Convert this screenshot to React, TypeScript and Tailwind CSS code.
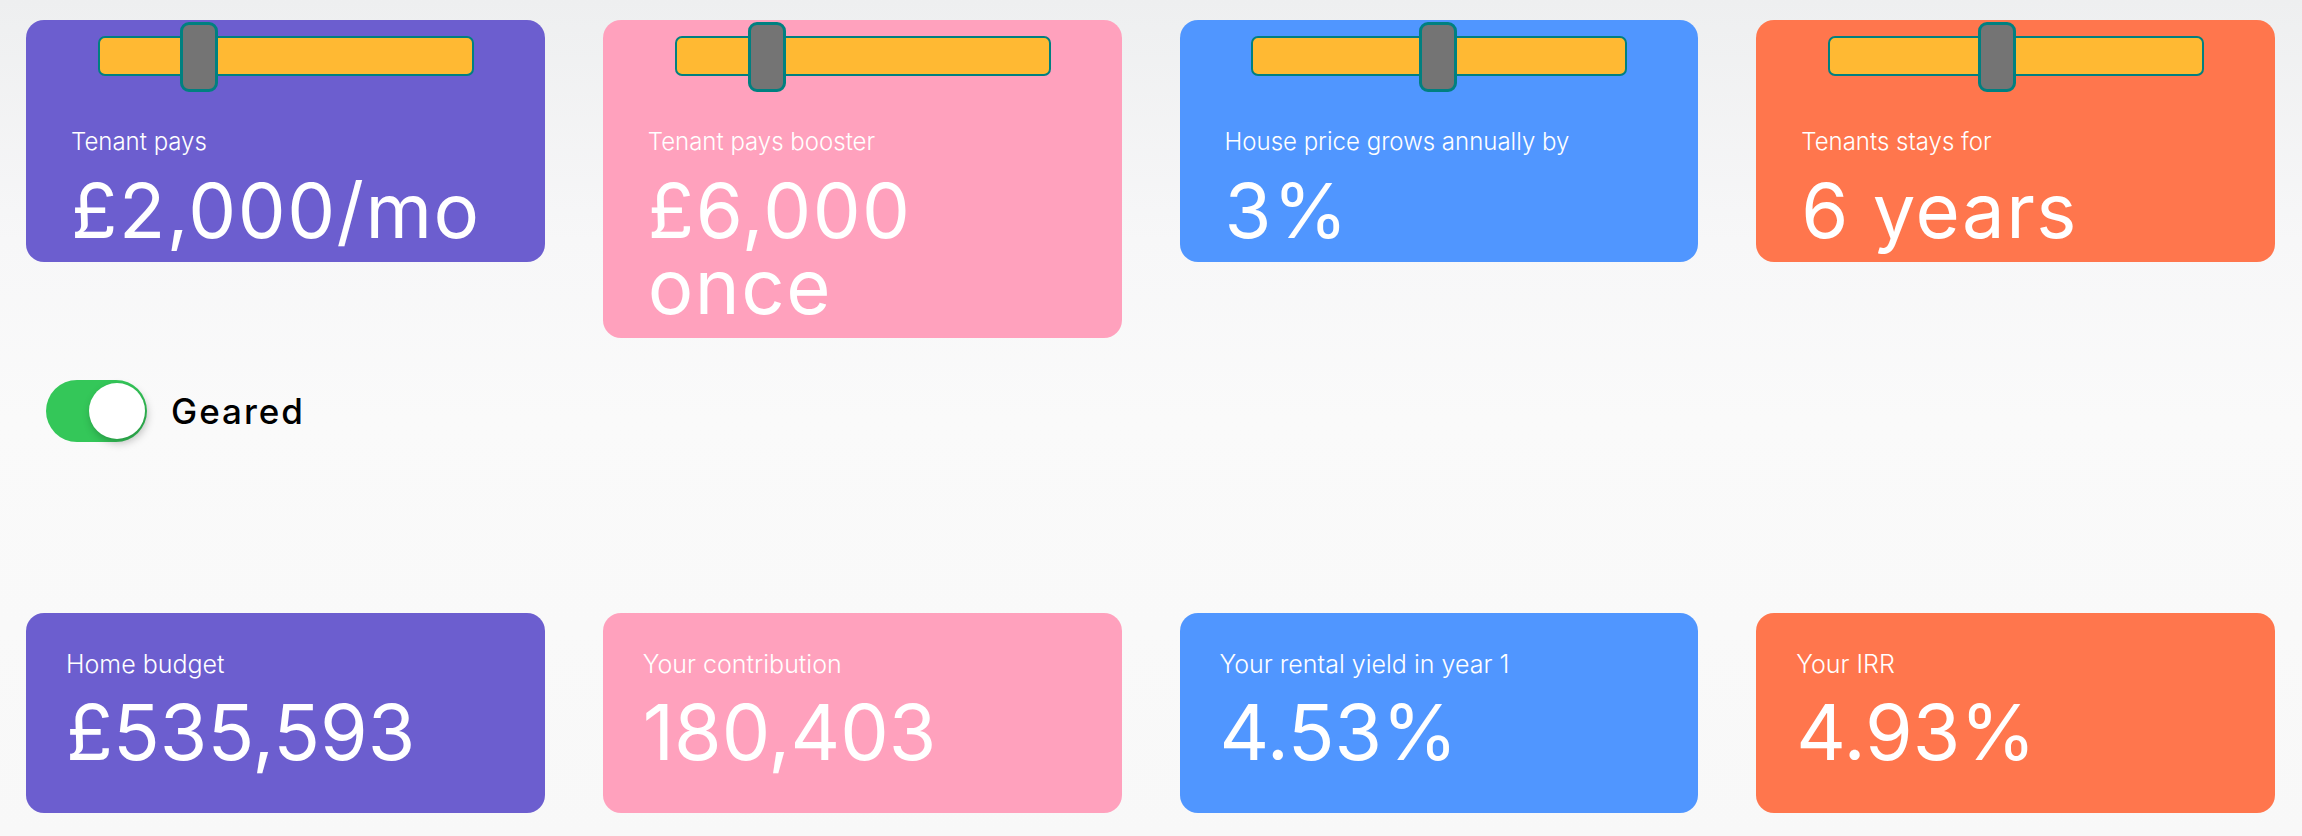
import React, { FunctionComponent } from 'react'

type SliderCardProps = {
	color: string;
	label: string;
	lines: string[];
	thumbLeft: string;
};

const SliderCard: FunctionComponent<SliderCardProps> = ({ color, label, lines, thumbLeft }) => {
	return <div className={ `rounded-[18px] pl-[45px] pr-[20px] pb-[14px] text-white ${ color }` }>
		<div className="relative mx-auto h-[72px] w-[376px] -translate-x-[12px] pt-[16px]">
			<div className="h-[40px] rounded-[7px] border-2 border-[#008080] bg-[#ffb933]"/>
			<div className={ `absolute top-[2px] h-[70px] w-[38px] rounded-[9px] border-[3px] border-[#008080] bg-[#747474] ${ thumbLeft }` }/>
		</div>
		<div className="mt-[32px] text-[24px] font-light leading-[36px]">{ label }</div>
		<div className="mt-[12px] text-[76px] font-normal leading-[76px] tracking-[1.5px]">
			{ lines.map((l) => <div key={ l } className="whitespace-nowrap">{ l }</div>) }
		</div>
	</div>;
};

type ResultCardProps = {
	color: string;
	label: string;
	value: string;
};

const ResultCard: FunctionComponent<ResultCardProps> = ({ color, label, value }) => {
	return <div className={ `h-[200px] rounded-[18px] pl-[40px] pt-[33px] text-white ${ color }` }>
		<div className="text-[25px] font-light leading-[36px]">{ label }</div>
		<div className="mt-[12px] whitespace-nowrap text-[77px] font-normal leading-[77px]">{ value }</div>
	</div>;
};

const App: FunctionComponent = () => {
	return <div className="min-h-[836px] w-full bg-[linear-gradient(180deg,#eeeff0_0px,#f7f7f8_240px,#fafafa_420px,#f8f8f8_100%)] pl-[26px] pr-[27px] pt-[20px] font-['Inter',sans-serif]">
		<div className="grid grid-cols-4 items-start gap-[58px]">
			<SliderCard color="bg-[#6c5ecf]" label="Tenant pays" lines={ ['£2,000/mo'] } thumbLeft="left-[82px]"/>
			<SliderCard color="bg-[#ffa1bd]" label="Tenant pays booster" lines={ ['£6,000', 'once'] } thumbLeft="left-[73px]"/>
			<SliderCard color="bg-[#5096ff]" label="House price grows annually by" lines={ ['3%'] } thumbLeft="left-[168px]"/>
			<SliderCard color="bg-[#ff764d]" label="Tenants stays for" lines={ ['6 years'] } thumbLeft="left-[150px]"/>
		</div>

		<div className="mt-[42px] ml-[20px] flex items-center gap-[24px]">
			<div className="relative h-[62px] w-[101px] rounded-full bg-[#34c759]">
				<div className="absolute right-[2px] top-[3px] h-[56px] w-[56px] rounded-full bg-white shadow-[2px_4px_8px_rgba(0,0,0,0.25)]"/>
			</div>
			<span className="text-[35px] font-medium tracking-[2px] text-black">Geared</span>
		</div>

		<div className="mt-[171px] grid grid-cols-4 gap-[58px]">
			<ResultCard color="bg-[#6c5ecf]" label="Home budget" value="£535,593"/>
			<ResultCard color="bg-[#ffa1bd]" label="Your contribution" value="180,403"/>
			<ResultCard color="bg-[#5096ff]" label="Your rental yield in year 1" value="4.53%"/>
			<ResultCard color="bg-[#ff764d]" label="Your IRR" value="4.93%"/>
		</div>
	</div>;
};

export default App;
